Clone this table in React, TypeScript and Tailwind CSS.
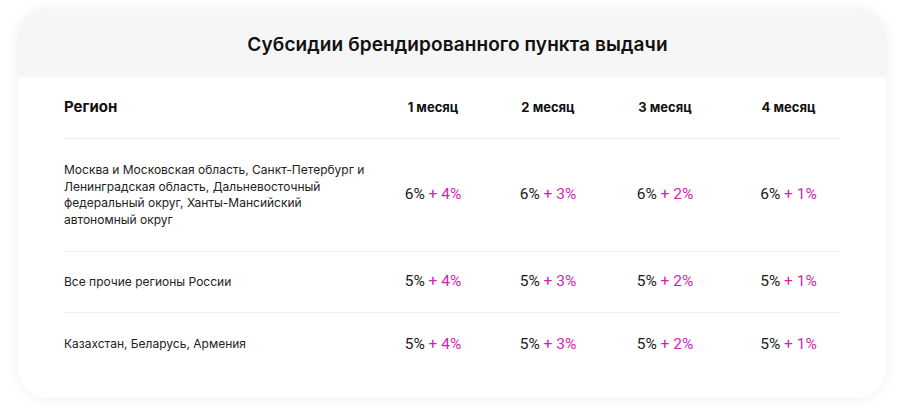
const months = ["1 месяц", "2 месяц", "3 месяц", "4 месяц"];

const rows = [
    {
        region: "Москва и Московская область, Санкт-Петербург и Ленинградская область, Дальневосточный федеральный округ, Ханты-Мансийский автономный округ",
        base: "6%",
        height: "h-[113px]",
    },
    { region: "Все прочие регионы России", base: "5%", height: "h-[61px]" },
    { region: "Казахстан, Беларусь, Армения", base: "5%", height: "h-[63px]" },
];

const bonus = ["+ 4%", "+ 3%", "+ 2%", "+ 1%"];

const grid = "grid grid-cols-[311px_116px_114px_120px_1fr] items-center";

export default function App() {
    return (
        <div className="w-[900px] h-[410px] bg-white pt-[9px] pl-[18px] font-['Inter',sans-serif]">
            <div className="w-[868px] h-[389px] rounded-[30px] bg-white shadow-[0_0_14px_rgba(0,0,0,0.07)] overflow-hidden">
                {/* шапка */}
                <div className="h-[68px] bg-[#f6f6f6] flex items-center justify-center pt-[5px] pl-[11px]">
                    <h2 className="text-[19px] font-semibold text-[#111] tracking-[0.1px]">
                        Субсидии брендированного пункта выдачи
                    </h2>
                </div>

                <div className="px-[46px]">
                    <div className={`${grid} h-[62px] border-b border-[#efefef] text-[#111] font-bold text-[13px]`}>
                        <div className="text-[15px]">Регион</div>
                        {months.map((m, i) => (
                            <div key={m} className={i === 3 ? "text-center pl-[12px]" : "text-center"}>
                                {m}
                            </div>
                        ))}
                    </div>

                    {rows.map((row, r) => (
                        <div
                            key={r}
                            className={`${grid} ${row.height} ${r < rows.length - 1 ? "border-b border-[#efefef]" : ""}`}
                        >
                            <div className="text-[12px] leading-[16.5px] text-[#222] pr-[8px]">{row.region}</div>
                            {bonus.map((b, i) => (
                                <div
                                    key={b}
                                    className={`${i === 3 ? "text-center pl-[12px]" : "text-center"} font-['Roboto',sans-serif] text-[15.5px] text-[#1a1a1a]`}
                                >
                                    {row.base} <span className="text-[#d21fb4]">{b}</span>
                                </div>
                            ))}
                        </div>
                    ))}
                </div>
            </div>
        </div>
    );
}
